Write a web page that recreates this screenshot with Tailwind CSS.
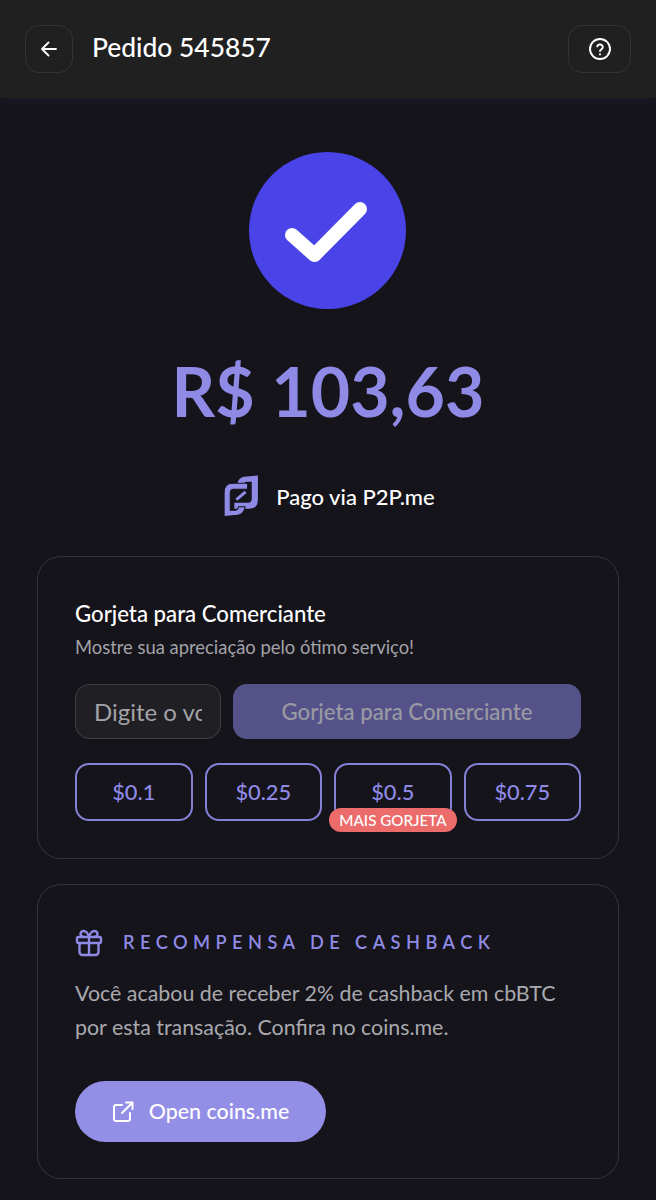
<!DOCTYPE html>
<html lang="pt">
<head>
  <meta charset="UTF-8" />
  <meta name="viewport" content="width=device-width, initial-scale=1.0"/>
  <title>Pedido 545857</title>
  <script src="https://cdn.jsdelivr.net/npm/@tailwindcss/browser@4"></script>
</head>
<body class="bg-[#15141b] text-white font-['Lato','Noto_Sans',sans-serif] h-[1200px] overflow-hidden">
  <!-- Cabecalho -->
  <header class="h-[98px] bg-[#202020] flex items-center justify-between pl-[25px] pr-[25px] shadow-[0_4px_10px_rgba(40,40,70,0.35)]">
    <div class="flex items-center gap-[19px]">
      <button class="w-[48px] h-[48px] rounded-[14px] border border-[#333333] flex items-center justify-center">
        <svg width="20" height="20" viewBox="0 0 20 20" fill="none" stroke="#fff" stroke-width="1.8" stroke-linecap="round" stroke-linejoin="round"><path d="M17 10H3.500M9.500 3.500 3 10l6.500 6.500"/></svg>
      </button>
      <h1 class="text-[26.400px] font-medium leading-none -mt-[3px]">Pedido 545857</h1>
    </div>
    <button class="w-[63px] h-[48px] rounded-[14px] border border-[#333333] flex items-center justify-center">
      <svg width="24" height="24" viewBox="0 0 24 24" fill="none" stroke="#fff" stroke-width="1.9" stroke-linecap="round" stroke-linejoin="round"><circle cx="12" cy="12" r="10"/><path d="M9.200 9.300a2.900 2.900 0 0 1 5.600.9c0 1.900-2.800 2.500-2.800 3.900"/><path d="M12 17.300v.1"/></svg>
    </button>
  </header>

  <main class="flex flex-col items-center">
    <!-- Estado do pagamento -->
    <div class="mt-[54px] mr-[2px] w-[157px] h-[157px] rounded-full bg-[#4a43e8] flex items-center justify-center">
      <svg width="157" height="157" viewBox="0 0 157 157" fill="none" stroke="#fff" stroke-width="14" stroke-linecap="round" stroke-linejoin="round"><path d="M43 83l22.500 20L111 57"/></svg>
    </div>
    <p class="mt-[38px] text-[68px] leading-[88px] font-bold text-[#8f8ae6]">R$ 103,63</p>
    <div class="mt-[40px] flex items-center gap-[18px] h-[42px] ml-[3px]">
      <svg width="34" height="42" viewBox="0 0 33 41" fill="#8f8ae6">
        <path d="M33 .5V24Q33 33 25 33H10V27H24Q27 27 27 23V6.500H22Q19.500 6.500 19 10H12.500Q13.500 1.500 22 1.500Z"/>
        <path d="M33 .5V24Q33 33 25 33H10V27H24Q27 27 27 23V6.500H22Q19.500 6.500 19 10H12.500Q13.500 1.500 22 1.500Z" transform="rotate(180 16.500 20.500)" stroke="#15141b" stroke-width="1"/>
        <path d="M12 24L21 16.500" fill="none" stroke="#8f8ae6" stroke-width="3"/>
      </svg>
      <span class="text-[22px] font-medium">Pago via P2P.me</span>
    </div>

    <!-- Gorjeta -->
    <section class="mt-[39px] w-[582px] h-[303px] rounded-[24px] border border-[#33333a] px-[37px] pt-[45px]">
      <h2 class="text-[22.200px] leading-[24px] font-medium">Gorjeta para Comerciante</h2>
      <p class="mt-[10px] text-[18.400px] leading-[22px] text-[#a3a3a8]">Mostre sua apreciação pelo ótimo serviço!</p>
      <div class="mt-[26px] flex gap-[12px]">
        <input placeholder="Digite o volume" class="w-[146px] h-[55px] rounded-[14px] border border-[#3e3e44] bg-[#1f1f24] px-[18px] text-[24px] placeholder:text-[#a3a3a8] outline-none" />
        <button class="w-[348px] h-[55px] rounded-[14px] bg-[#55528a] text-[22.200px] font-medium text-[#9a9aa3]">Gorjeta para Comerciante</button>
      </div>
      <div class="mt-[24px] grid grid-cols-4 gap-[12px] text-[21.800px] font-medium text-[#8f8ae6]">
        <button class="h-[58px] rounded-[14px] border-2 border-[#8480d6]">$0.1</button>
        <button class="h-[58px] rounded-[14px] border-2 border-[#8480d6]">$0.25</button>
        <div class="relative">
          <button class="w-full h-[58px] rounded-[14px] border-2 border-[#8480d6]">$0.5</button>
          <span class="absolute left-[-5px] top-[45px] w-[128px] h-[24px] rounded-full bg-[#ec6b6b] text-white text-[15.200px] font-medium flex items-center justify-center whitespace-nowrap">MAIS GORJETA</span>
        </div>
        <button class="h-[58px] rounded-[14px] border-2 border-[#8480d6]">$0.75</button>
      </div>
    </section>

    <!-- Cashback -->
    <section class="mt-[25px] w-[582px] h-[295px] rounded-[24px] border border-[#33333a] px-[37px] pt-[44px]">
      <div class="flex items-center gap-[20px]">
        <svg width="28" height="28" viewBox="0 0 28 28" fill="none" stroke="#8f8ae6" stroke-width="2.400" stroke-linecap="round" stroke-linejoin="round"><rect x="2" y="8" width="24" height="6" rx="1.500"/><path d="M4.500 14v9a3 3 0 0 0 3 3h13a3 3 0 0 0 3-3v-9M14 8v18M14 8s-1.500-6-5.500-6a3 3 0 0 0 0 6M14 8s1.500-6 5.500-6a3 3 0 0 1 0 6"/></svg>
        <span class="text-[18.200px] font-semibold tracking-[0.3em] text-[#8f8ae6] whitespace-nowrap">RECOMPENSA DE CASHBACK</span>
      </div>
      <p class="mt-[19px] text-[21.400px] leading-[34px] text-[#a9a9ae]">Você acabou de receber 2% de cashback em cbBTC<br>por esta transação. Confira no coins.me.</p>
      <button class="mt-[37px] w-[251px] h-[61px] rounded-full bg-[#938ee6] flex items-center justify-center gap-[15px] text-[21.400px] font-medium">
        <svg width="22" height="22" viewBox="0 0 22 22" fill="none" stroke="#fff" stroke-width="2" stroke-linecap="round" stroke-linejoin="round"><path d="M10 4H4a2 2 0 0 0-2 2v12a2 2 0 0 0 2 2h12a2 2 0 0 0 2-2v-6"/><path d="M14 1.500h6.500V8M20.500 1.500 10 12"/></svg>
        Open coins.me
      </button>
    </section>
  </main>
</body>
</html>
